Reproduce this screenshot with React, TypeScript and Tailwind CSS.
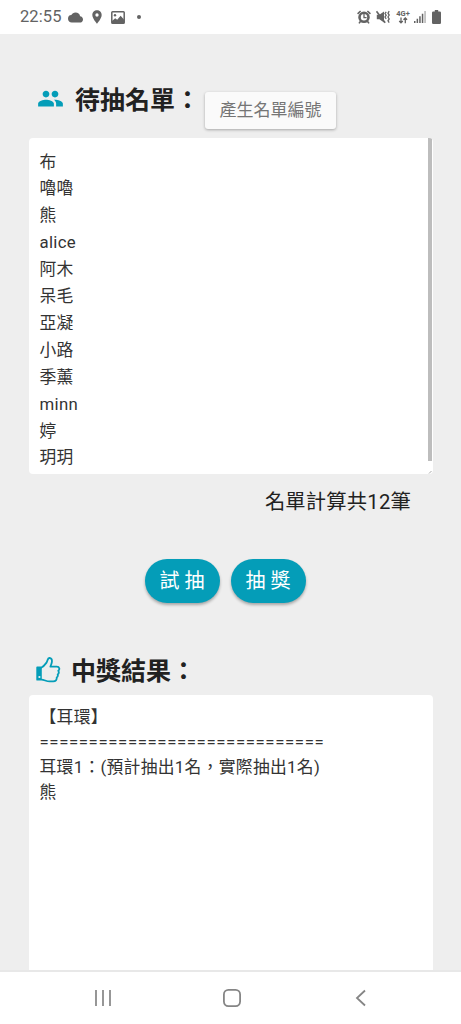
import { MdCloud, MdPeople, MdPlace } from "react-icons/md";

const names = ["布", "嚕嚕", "熊", "alice", "阿木", "呆毛", "亞凝", "小路", "季薰", "minn", "婷", "玥玥"];

const results = ["耳環1：(預計抽出1名，實際抽出1名)", "熊"];

function PictureIcon() {
  return (
    <svg width="14" height="13" viewBox="0 0 14 13" fill="currentColor">
      <rect x=".8" y=".8" width="12.4" height="11.4" rx=".8" fill="none" stroke="currentColor" strokeWidth="1.5" />
      <circle cx="4" cy="4.2" r="1.2" />
      <path d="M1 10 4.2 7.2l2 1.5 3.4-4 3.6 4V12H1z" />
    </svg>
  );
}

function AlarmIcon() {
  return (
    <svg width="14" height="14" viewBox="0 0 14 14" fill="none" stroke="currentColor">
      <circle cx="7" cy="7.3" r="4.5" strokeWidth="2.6" />
      <path d="M7 4v3.7h2.6" strokeWidth="1.3" />
      <path d="M.6 3.8 3.6 1M13.4 3.8l-3-2.8M3.6 11.2 2 13.4M10.4 11.2 12 13.4" strokeWidth="1.6" />
    </svg>
  );
}

function MuteIcon() {
  return (
    <svg width="15" height="14" viewBox="0 0 15 14" fill="currentColor">
      <path d="M.8 4.8h2.6L8 1.5v11L3.4 9.2H.8z" />
      <path d="M.5 1.3 9.2 12.8" stroke="currentColor" strokeWidth="1.5" />
      <path
        d="M10.2 1.8 9 3.6l1.2 1.6L9 7l1.2 1.8M13.2 1.2 12 3.2l1.2 1.9L12 7l1.2 1.9L12 10.8l1.2 1.8"
        fill="none"
        stroke="currentColor"
        strokeWidth="1.3"
      />
    </svg>
  );
}

function NetworkIcon() {
  return (
    <div className="flex w-[14px] flex-col items-center">
      <span className="text-[7.5px] leading-[7px] font-bold">4G+</span>
      <svg width="10" height="7" viewBox="0 0 10 7" fill="none" stroke="currentColor">
        <path d="M3 .5v5M1.2 4 3 5.8 4.8 4M7.3 6.3v-5M5.5 2.8 7.3 1l1.8 1.8" strokeWidth="1.3" />
      </svg>
    </div>
  );
}

function SignalIcon() {
  return (
    <svg width="12" height="12" viewBox="0 0 12 12" fill="currentColor">
      <path d="M0 10h1.5v2H0zM2.6 7.8h1.5V12H2.6zM5.2 5.3h1.5V12H5.2zM7.8 2.7h1.5V12H7.8z" />
      <path d="M10.4 0h1.3v12h-1.3z" opacity=".55" />
    </svg>
  );
}

function BatteryIcon() {
  return (
    <svg width="9" height="14" viewBox="0 0 9 14" fill="currentColor">
      <path d="M2.8 0h3.4v1.6h1.6A1.2 1.2 0 0 1 9 2.8v10a1.2 1.2 0 0 1-1.2 1.2H1.2A1.2 1.2 0 0 1 0 12.8v-10a1.2 1.2 0 0 1 1.2-1.2h1.6z" />
    </svg>
  );
}

function ThumbIcon() {
  return (
    <svg className="mt-[6px] ml-[7px] text-[#049db8]" width="25" height="26" viewBox="0 0 25 26">
      <path
        d="M1.2 10.5h4.3c2.2-1 3.6-3 5-4.9 1.3-1.8.9-4.4 2.8-4.6 2-.2 2.9 1.8 2.6 3.8-.2 1.8-1 3.2-1.5 4.9h6.4c2.8 0 3.2 3 1.5 4.1.8 1.4.5 2.8-.6 3.6.4 1.4 0 2.5-1 3.1.2 2.3-1 3.9-3.5 3.9h-3.6c-3.3 0-5.2-1.6-8.1-1.7H1.2z"
        fill="none"
        stroke="currentColor"
        strokeWidth="1.8"
        strokeLinejoin="round"
      />
      <path d="M1.2 10.5h4.6v12.2H1.2z" fill="currentColor" />
      <circle cx="3.4" cy="20" r="1.1" fill="#eee" />
    </svg>
  );
}

function StatusBar() {
  return (
    <header className="flex h-[34px] shrink-0 items-center justify-between bg-white pr-[20px] pl-[20px] text-[#636363]">
      <div className="flex items-center">
        <span className="w-[42px] text-[16.5px] tracking-[0.1px] whitespace-nowrap">22:55</span>
        <MdCloud className="ml-[6px] size-[15px]" />
        <MdPlace className="ml-[6px] size-[16px]" />
        <span className="ml-[6px]">
          <PictureIcon />
        </span>
        <span className="ml-[12px] size-1 rounded-full bg-[#636363]" />
      </div>
      <div className="flex items-center">
        <AlarmIcon />
        <span className="ml-[5px]">
          <MuteIcon />
        </span>
        <span className="ml-[5px]">
          <NetworkIcon />
        </span>
        <span className="ml-[4px]">
          <SignalIcon />
        </span>
        <span className="ml-[6px]">
          <BatteryIcon />
        </span>
      </div>
    </header>
  );
}

function DrawButton({ label }: { label: string }) {
  return (
    <button className="h-[44px] w-[75px] rounded-full bg-[#049db8] text-[20px] whitespace-nowrap text-white shadow-[0_2px_3px_rgba(0,0,0,0.3)]">
      {label}
    </button>
  );
}

function NavBar() {
  return (
    <nav className="flex h-[54px] shrink-0 items-center border-t-2 border-[#e8e8e8] bg-white text-[#858585]">
      <div className="flex w-full items-center pl-[94px]">
        <svg width="18" height="18" viewBox="0 0 18 18" fill="none" stroke="currentColor" strokeWidth="1.7">
          <path d="M2 1v16M9 1v16M16 1v16" />
        </svg>
        <svg className="ml-[111px]" width="18" height="18" viewBox="0 0 18 18" fill="none" stroke="currentColor" strokeWidth="1.8">
          <rect x=".9" y=".9" width="16.2" height="16.2" rx="4.5" />
        </svg>
        <svg className="ml-[114px]" width="11" height="18" viewBox="0 0 11 18" fill="none" stroke="currentColor" strokeWidth="1.8">
          <path d="M10 1.5 2 9l8 7.5" />
        </svg>
      </div>
    </nav>
  );
}

export default function App() {
  return (
    <div className="flex h-[1024px] w-[461px] flex-col overflow-hidden bg-[#eee] font-[Roboto,'Noto_Sans_CJK_TC',sans-serif] text-[#212121]">
      <StatusBar />

      <main className="flex min-h-0 flex-1 flex-col overflow-hidden pr-[28px] pl-[29px]">
        <div className="mt-[46px] flex h-[58px] items-start">
          <MdPeople className="mt-[5px] ml-[8px] size-[27px] text-[#049db8]" />
          <h2 className="mt-px ml-[11px] w-[129px] text-[25px] leading-[40px] font-bold whitespace-nowrap">
            待抽名單：
          </h2>
          <button className="mt-[12px] ml-px h-[37px] w-[131px] rounded-[3px] bg-[#fafafa] text-[17px] whitespace-nowrap text-[#757575] shadow-[0_1px_3px_rgba(0,0,0,0.3)]">
            產生名單編號
          </button>
        </div>

        <div className="flex h-[336px] shrink-0 justify-between overflow-hidden rounded-[4px] bg-white">
          <ul className="pt-[10.5px] pl-[10.5px] text-[16.8px] leading-[26.9px] tracking-[0.3px] text-[#333]">
            {names.map((name) => (
              <li key={name}>{name}</li>
            ))}
          </ul>
          <div className="flex w-[5px] flex-col justify-between">
            <div className="h-[323px] w-[4px] bg-[#bdbdbd]" />
            <svg width="4" height="4" viewBox="0 0 4 4" stroke="#aaa">
              <path d="M1 3.5 3.5 1" />
            </svg>
          </div>
        </div>

        <p className="mt-[13px] pr-[22px] text-right text-[20.3px] leading-[30px] tracking-[0.2px]">
          名單計算共{names.length}筆
        </p>

        <div className="mt-[42px] flex justify-center gap-[11px] pr-[12px]">
          <DrawButton label="試 抽" />
          <DrawButton label="抽 獎" />
        </div>

        <div className="mt-[48px] flex h-[44px] shrink-0 items-start">
          <ThumbIcon />
          <h2 className="mt-px ml-[10px] text-[25px] leading-[40px] font-bold whitespace-nowrap">中獎結果：</h2>
        </div>

        <div className="min-h-0 flex-1 rounded-t-[4px] bg-white pt-[10px] pl-[10.5px] text-[16.8px] leading-[25px] tracking-[0.3px] whitespace-nowrap text-[#333]">
          <p>【耳環】</p>
          <p className="tracking-[0.61px]">{"=".repeat(29)}</p>
          {results.map((line) => (
            <p key={line}>{line}</p>
          ))}
        </div>
      </main>

      <NavBar />
    </div>
  );
}
